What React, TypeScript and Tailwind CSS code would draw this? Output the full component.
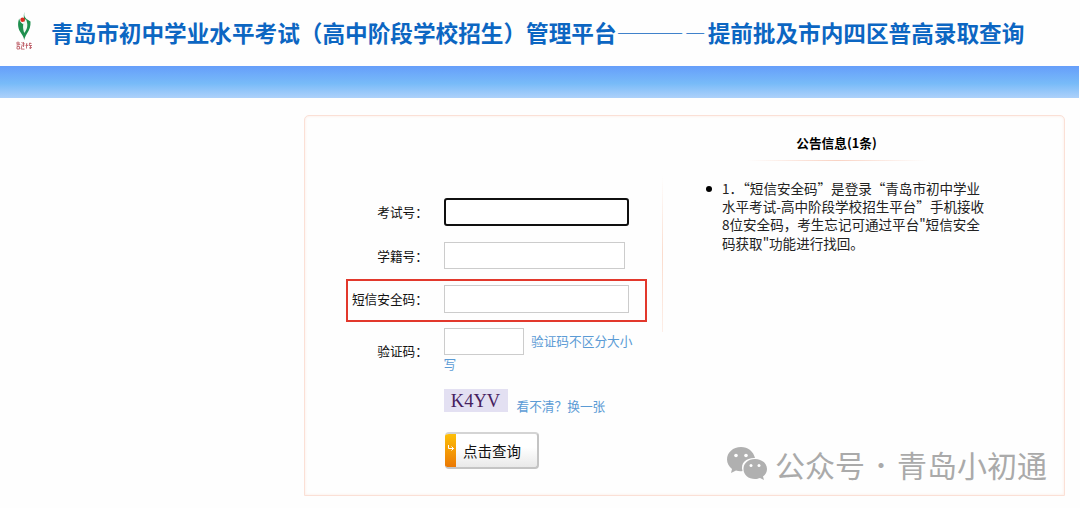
import type { ReactNode } from 'react'

function Logo() {
  return (
    <svg width="18" height="39" viewBox="0 0 18 39">
      <path d="M9.600 0C8.500 3 9.500 5 11.500 7L15.500 9.500C15.800 14 14.500 18 12 21.500C10.500 24 9.600 26 9.200 28C8.800 25 7 22.500 5 19.500C2.500 15.500 2.800 10 4.200 6.500C4.600 9 6 11 8.500 12.500C10.500 9 7.500 4 9.600 0Z" fill="#1f8f4e" />
      <path d="M10.800 7C7.500 11 7.400 16 9.300 21C12.800 16.500 13.200 12 10.800 7Z" fill="#eef8f1" />
      <circle cx="7.600" cy="7.800" r="2.300" fill="#dd2a1f" />
      <path
        d="M1 31H5M3 29.500V33.500M1.500 33L5 32.500M2 34.500H4.500V37H2ZM6.500 30L7.500 31M6 32.500L7 33.500L6 37L9.500 37.200M7.500 31.500H9.500M8.500 30V35M7.500 33H9.500M11.500 31.500V36.500M10.500 33.500H13M11 32H12.500M14 31.500H16.500M15 30.500L14 33.500H17M15.500 33V37M14 36L17 35.500"
        fill="none"
        stroke="#c0626c"
        strokeWidth="0.900"
      />
    </svg>
  )
}

function Header() {
  return (
    <header>
      <div className="flex h-[66px] items-start pl-[15px]">
        <div className="pt-[12px]">
          <Logo />
        </div>
        <h1 className="ml-[18px] flex whitespace-nowrap pt-[16px] text-[22.64px] font-bold leading-[33px] text-[#0c66c2]">
          <span>青岛市初中学业水平考试（高中阶段学校招生）管理平台</span>
          <span className="w-[68.500px] text-[27.500px] font-thin leading-[27px]">———</span>
          <span className="w-[22.500px] font-thin leading-[29px]">—</span>
          <span>提前批及市内四区普高录取查询</span>
        </h1>
      </div>
      <div className="h-[32px] w-[1079px] bg-linear-to-b from-[#669efa] via-[#78bbf8] via-55% to-[#add1fa]" />
    </header>
  )
}

function Field({ label, className, children }: { label: string; className: string; children: ReactNode }) {
  return (
    <div className={`flex ${className}`}>
      <label className="w-[80px] shrink-0 whitespace-nowrap text-right text-[12.7px] leading-[28px] text-[#111]">{label}</label>
      {children}
    </div>
  )
}

function QueryForm() {
  return (
    <form className="w-[357px] shrink-0 pl-[41px] pt-[82px]">
      <Field label="考试号：" className="h-[44px] pl-[2px]">
        <input className="ml-[15.500px] h-[28px] w-[185px] rounded-[3px] border-2 border-[#101010] bg-white outline-none" />
      </Field>
      <Field label="学籍号：" className="h-[37px] pl-[2px]">
        <input className="ml-[15.500px] h-[27px] w-[181.500px] border border-[#ccc] bg-white outline-none" />
      </Field>
      <div className="h-[43px] w-[301px] border-2 border-[#e2382c]">
        <Field label="短信安全码：" className="pt-[4px]">
          <input className="ml-[15.500px] h-[28px] w-[185px] border border-[#ccc] bg-white outline-none" />
        </Field>
      </div>
      <div className="flex pl-[2px] pt-[6px]">
        <label className="w-[80px] shrink-0 pt-[9px] text-right text-[12.7px] leading-[28px] text-[#111]">验证码：</label>
        <div className="ml-[15.500px] w-[195px] text-[12.7px] text-[#5b9bd5]">
          <div className="flex h-[27px] items-start">
            <input className="h-[27px] w-[80.500px] border border-[#ccc] bg-white outline-none" />
            <span className="ml-[7px] whitespace-nowrap leading-[26px]">验证码不区分大小</span>
          </div>
          <div className="leading-[18px]">写</div>
          <div className="mt-[16px] flex h-[27px]">
            <span className="h-[23px] w-[64px] bg-[#e3e0f2] text-center font-['Liberation_Serif',serif] text-[18.500px] leading-[24px] text-[#46205f]">K4YV</span>
            <a className="ml-[9px] whitespace-nowrap pt-[7px] leading-[20px]">看不清？换一张</a>
          </div>
        </div>
      </div>
      <button type="button" className="ml-[99px] mt-[16px] flex h-[37px] w-[94px] items-stretch overflow-hidden rounded-[4px] border-2 border-[#c4c4c4] border-l-0 border-t-[#d4d4d4] bg-linear-to-b from-white from-40% to-[#e9e9e9]">
        <span className="flex w-[11px] items-center justify-center bg-linear-to-b from-[#fdbf08] to-[#ea7804]">
          <svg width="8" height="8" viewBox="0 0 8 8" fill="none" stroke="#fff" strokeWidth="1" className="-mt-[5px]">
            <path d="M1.500 1V4.500H6.500M4.500 2.500L6.500 4.500L4.500 6.500" />
          </svg>
        </span>
        <span className="pl-[7px] text-[14.500px] leading-[34px] text-[#111]">点击查询</span>
      </button>
    </form>
  )
}

function Notice() {
  return (
    <section className="w-[404px]">
      <h2 className="mt-[17px] w-[347px] text-center text-[12.7px] font-bold leading-[20px]">公告信息(1条)</h2>
      <div className="ml-[84px] mt-[7px] h-px w-[180px] bg-linear-to-r from-transparent via-[#f9d3c4] to-transparent" />
      <ul className="ml-[43px] mt-[18px] text-[13.550px] leading-[18.200px] text-[#222]">
        <li className="flex">
          <span className="mr-[10px] mt-[7px] size-[6px] shrink-0 rounded-full bg-black" />
          <div className="whitespace-nowrap">
            <div>1．“短信安全码”是登录“青岛市初中学业</div>
            <div>水平考试-高中阶段学校招生平台”手机接收</div>
            <div>8位安全码，考生忘记可通过平台"短信安全</div>
            <div>码获取"功能进行找回。</div>
          </div>
        </li>
      </ul>
    </section>
  )
}

function WechatMark() {
  return (
    <div className="absolute left-[421px] top-[330px] flex items-center whitespace-nowrap text-[#aaa]">
      <svg width="42" height="35" viewBox="0 0 42 35">
        <path fill="#b0b0b0" d="M15 1C7 1 1 6.500 1 13.500C1 17.500 3 20.500 6 23L5 27L10 24.500C12 25 14 25.500 16.500 25C14 16.500 21 11.500 29 12C27.500 5.500 22 1 15 1Z" />
        <path fill="#b0b0b0" d="M29 13C22 13 17.500 17.500 17.500 23C17.500 29 22.500 33 29 33C31 33 32.500 32.500 34 32L38 34L37 30.500C39.500 28.500 41 26 41 23C41 17.500 36 13 29 13Z" />
        <g fill="#fff">
          <circle cx="10" cy="9.500" r="1.800" />
          <circle cx="20" cy="9.500" r="1.800" />
          <circle cx="25" cy="19.500" r="1.500" />
          <circle cx="33" cy="19.500" r="1.500" />
        </g>
      </svg>
      <span className="ml-[7px] text-[30px] leading-[34px]">公众号</span>
      <span className="w-[32px] text-center text-[24px] leading-[34px]">·</span>
      <span className="text-[30px] leading-[34px]">青岛小初通</span>
    </div>
  )
}

export default function App() {
  return (
    <div lang="zh-CN" className="h-[508px] w-[1080px] overflow-hidden bg-[#fefefe] font-['Noto_Sans_CJK_SC',sans-serif] text-black">
      <Header />
      <main className="relative ml-[304px] mt-[17px] flex h-[381px] w-[761px] rounded-t-[5px] border border-[#fbe0d6] bg-[#fefefe] shadow-[inset_0_0_3px_#fdeae2]">
        <QueryForm />
        <div className="mt-[60px] h-[156px] w-px bg-linear-to-b from-transparent via-[#fbdccd] to-[#fdeee7]" />
        <Notice />
        <WechatMark />
      </main>
    </div>
  )
}
